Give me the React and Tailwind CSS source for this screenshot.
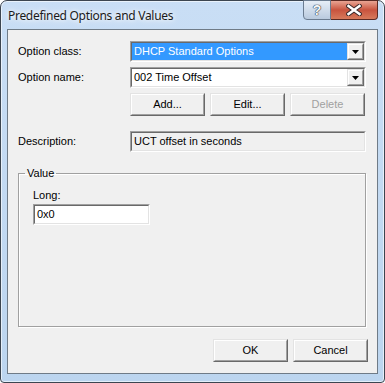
const font = { fontFamily: '"Liberation Sans", Arial, sans-serif' };

const Sunken = ({ className, inner, children }) => (
  <div className={`border border-t-[#a0a0a0] border-l-[#a0a0a0] border-b-white border-r-white ${className}`}>
    <div className={`h-full border border-t-[#696969] border-l-[#696969] border-b-[#e3e3e3] border-r-[#e3e3e3] ${inner}`}>
      {children}
    </div>
  </div>
);

const Raised = ({ className, children }) => (
  <div className={`border border-t-[#e3e3e3] border-l-[#e3e3e3] border-b-[#696969] border-r-[#696969] bg-[#f0f0f0] ${className}`}>
    <div className="h-full flex items-center justify-center border border-t-white border-l-white border-b-[#a0a0a0] border-r-[#a0a0a0]">
      {children}
    </div>
  </div>
);

const Arrow = () => (
  <Raised className="w-[17px] h-full shrink-0">
    <svg width="7" height="4" viewBox="0 0 7 4">
      <path d="M0 0h7L3.5 4z" fill="#000" />
    </svg>
  </Raised>
);

const Combo = ({ value, selected }) => (
  <Sunken className="w-[236px] h-[21px]" inner="flex bg-white">
    <div
      className={`flex-1 flex items-center pl-[2px] text-[11px] ${selected ? 'bg-[#3399ff] text-white' : 'text-black'}`}
    >
      {value}
    </div>
    <Arrow />
  </Sunken>
);

const Button = ({ children, disabled }) => (
  <Raised className="w-[75px] h-[23px]">
    <span className={`text-[11px] ${disabled ? 'text-[#a0a0a0]' : 'text-black'}`}>{children}</span>
  </Raised>
);

export default function App() {
  return (
    <div className="w-[385px] h-[383px] bg-white" style={font}>
      <div className="w-[385px] h-[383px] flex flex-col rounded-t-[7px] rounded-b-[4px] border border-[#3c4550] bg-gradient-to-b from-[#c9def5] to-[#bcd5ef] shadow-[inset_0_0_0_1px_rgba(255,255,255,0.6)]">
        {/* title bar */}
        <div className="relative h-[28px] shrink-0 flex items-start">
          <div
            className="pl-[7px] pt-[6px] text-[12px] tracking-[-0.3px] text-[#1b1b1b] [text-shadow:0_0_8px_#ffffff,0_0_4px_#ffffff]"
            style={{ fontFamily: '"Noto Sans", "Open Sans", sans-serif' }}
          >
            Predefined Options and Values
          </div>
          <div className="absolute right-[6px] top-[-1px] flex">
            <div className="w-[28px] h-[20px] rounded-bl-[4px] border border-[#6b7c90] bg-gradient-to-b from-[#e6eef7] to-[#b9cade] flex items-center justify-center text-[14px] font-bold text-[#f4f7fa] [text-shadow:0_0_1px_#2c3a4a,0_0_1px_#2c3a4a,0_0_1px_#2c3a4a]">
              ?
            </div>
            <div className="w-[47px] h-[20px] rounded-br-[4px] border border-l-0 border-[#5a2a24] bg-gradient-to-b from-[#e8a493] via-[#c8533e] to-[#d77a5b] flex items-center justify-center">
              <svg width="16" height="12" viewBox="0 0 16 12">
                <path d="M2.5 2L13.5 10M13.5 2L2.5 10" stroke="#3c2a2a" strokeWidth="4.5" strokeLinecap="square" />
                <path d="M2.5 2L13.5 10M13.5 2L2.5 10" stroke="#ffffff" strokeWidth="2.5" strokeLinecap="square" />
              </svg>
            </div>
          </div>
        </div>

        {/* client area */}
        <div className="mx-[6px] mb-[8px] flex-1 border border-[#6f7b87] bg-[#f0f0f0] pl-[10px] pr-[8px] pt-[11px] text-[11px] text-black">
          <div className="flex items-center h-[21px]">
            <div className="w-[112px]">Option class:</div>
            <Combo value="DHCP Standard Options" selected />
          </div>
          <div className="flex items-center h-[21px] mt-[5px]">
            <div className="w-[112px]">Option name:</div>
            <Combo value="002 Time Offset" />
          </div>
          <div className="flex gap-[5px] ml-[112px] mt-[5px]">
            <Button>Add...</Button>
            <Button>Edit...</Button>
            <Button disabled>Delete</Button>
          </div>
          <div className="flex items-center h-[21px] mt-[15px]">
            <div className="w-[112px]">Description:</div>
            <Sunken className="w-[236px] h-[21px]" inner="flex items-center pl-[2px] bg-[#f0f0f0]">
              UCT offset in seconds
            </Sunken>
          </div>

          <fieldset className="mt-[15px] h-[160px] w-[348px] border border-[#a0a0a0] shadow-[inset_1px_1px_0_#ffffff,1px_1px_0_#ffffff]">
            <legend className="ml-[6px] px-[2px] text-[11px] leading-[13px]">Value</legend>
            <div className="pl-[14px] pt-[9px]">
              <div className="leading-[13px]">Long:</div>
              <Sunken className="mt-[2px] w-[117px] h-[21px]" inner="flex items-center pl-[2px] bg-white">
                0x0
              </Sunken>
            </div>
          </fieldset>

          <div className="flex justify-end gap-[5px] mt-[12px] pr-[1px]">
            <Button>OK</Button>
            <Button>Cancel</Button>
          </div>
        </div>
      </div>
    </div>
  );
}
